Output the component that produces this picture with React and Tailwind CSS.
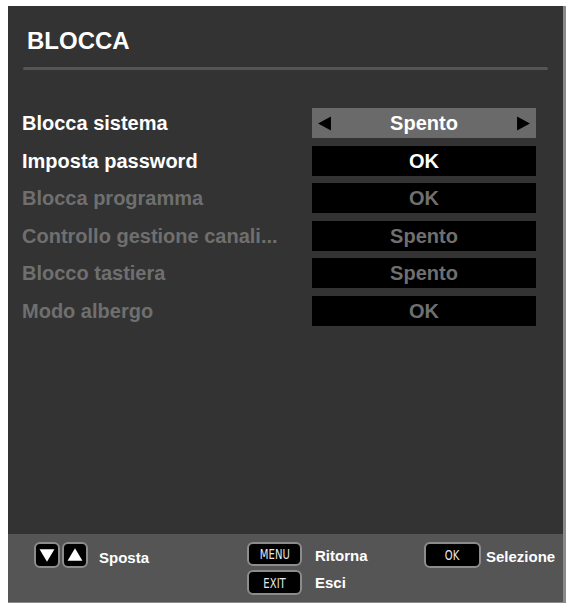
import React from 'react';

const rows = [
  { label: 'Blocca sistema', value: 'Spento', state: 'selected' },
  { label: 'Imposta password', value: 'OK', state: 'active' },
  { label: 'Blocca programma', value: 'OK', state: 'disabled' },
  { label: 'Controllo gestione canali...', value: 'Spento', state: 'disabled' },
  { label: 'Blocco tastiera', value: 'Spento', state: 'disabled' },
  { label: 'Modo albergo', value: 'OK', state: 'disabled' },
];

const Tri = ({ dir, color, size = 14 }) => (
  <svg width={size} height={size} viewBox="0 0 14 14">
    {dir === 'left' && <polygon points="13,0.5 13,13.5 1,7" fill={color} />}
    {dir === 'right' && <polygon points="1,0.5 1,13.5 13,7" fill={color} />}
    {dir === 'down' && <polygon points="0.5,2 13.5,2 7,13" fill={color} />}
    {dir === 'up' && <polygon points="0.5,12 13.5,12 7,1" fill={color} />}
  </svg>
);

const Key = ({ children, className = '' }) => (
  <div
    className={`flex items-center justify-center bg-black border-2 border-[#8c8c8c] rounded-[6px] text-[#e6e6e6] ${className}`}
  >
    {children}
  </div>
);

const KeyLabel = ({ children }) => (
  <span className="inline-block scale-x-[0.72] text-[14px] font-normal leading-none font-['DejaVu_Sans',sans-serif]">
    {children}
  </span>
);

const Row = ({ label, value, state }) => {
  const labelColor = state === 'disabled' ? 'text-[#6f6f6f]' : 'text-white';
  return (
    <div className="flex items-center h-[30px]">
      <div className={`w-[304px] pl-[14px] text-[20px] font-bold leading-none ${labelColor}`}>{label}</div>
      {state === 'selected' ? (
        <div className="w-[224px] h-[30px] bg-[#6a6a6a] flex items-center justify-between px-[5px]">
          <Tri dir="left" color="#000" size={15} />
          <span className="text-white text-[20px] font-bold">{value}</span>
          <Tri dir="right" color="#000" size={15} />
        </div>
      ) : (
        <div
          className={`w-[224px] h-[30px] bg-black flex items-center justify-center text-[20px] font-bold ${
            state === 'active' ? 'text-white' : 'text-[#6f6f6f]'
          }`}
        >
          {value}
        </div>
      )}
    </div>
  );
};

export default function App() {
  return (
    <div className="w-[571px] h-[609px] bg-white pt-[6px] pl-[8px] font-['Liberation_Sans',Arial,sans-serif]">
      <div className="w-[558px] h-[597px] bg-[#333333] border-r-[3px] border-b-[1px] border-[#8a8a8a] flex flex-col">
        {/* Header */}
        <div className="h-[61px] px-[15px] pt-[23px]">
          <h1 className="text-[24px] font-bold text-white leading-none pl-[4px]">BLOCCA</h1>
        </div>
        <div className="mx-[15px] h-[3px] bg-[#555555] rounded-full" />

        {/* Menu rows */}
        <div className="flex flex-col gap-[7.5px] pt-[38px]">
          {rows.map((r) => (
            <Row key={r.label} {...r} />
          ))}
        </div>

        <div className="flex-1" />

        {/* Footer */}
        <div className="h-[68px] bg-[#555555] flex pt-[8px] text-white text-[15px] font-bold">
          <div className="flex items-start ml-[26px] w-[213px]">
            <Key className="w-[26px] h-[26px]">
              <Tri dir="down" color="#fff" size={16} />
            </Key>
            <Key className="w-[26px] h-[26px] ml-[2px]">
              <Tri dir="up" color="#fff" size={16} />
            </Key>
            <span className="ml-[11px] mt-[5px]">Sposta</span>
          </div>
          <div className="flex flex-col gap-[4px] w-[55px]">
            <Key className="w-[55px] h-[24px]">
              <KeyLabel>MENU</KeyLabel>
            </Key>
            <Key className="w-[55px] h-[25px]">
              <KeyLabel>EXIT</KeyLabel>
            </Key>
          </div>
          <div className="flex flex-col ml-[13px] w-[109px]">
            <span className="h-[24px] flex items-center mt-[2px]">Ritorna</span>
            <span className="h-[24px] flex items-center mt-[3px]">Esci</span>
          </div>
          <div className="flex items-start">
            <Key className="w-[57px] h-[26px]">
              <KeyLabel>OK</KeyLabel>
            </Key>
            <span className="ml-[5px] mt-[4px]">Selezione</span>
          </div>
        </div>
      </div>
    </div>
  );
}
